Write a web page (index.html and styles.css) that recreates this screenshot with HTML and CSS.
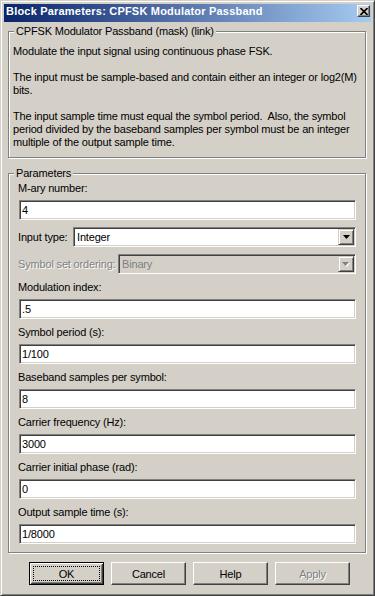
FILE: index.html
```html
<!DOCTYPE html>
<html lang="en">
<head>
	<meta charset="UTF-8"/>
	<meta name="viewport" content="width=device-width, initial-scale=1"/>
	<title>Block Parameters: CPFSK Modulator Passband</title>
	<link rel="stylesheet" href="styles.css">
</head>
<body>

<div class="window">
	<div class="titlebar">
		<span class="title">Block Parameters: CPFSK Modulator Passband</span>
		<span class="close-btn" aria-label="Close">
			<svg width="8" height="7" viewBox="0 0 8 7">
				<path d="M0.5 0 L7.5 7 M7.5 0 L0.5 7" stroke="#000" stroke-width="1.6" fill="none"/>
			</svg>
		</span>
	</div>

	<div class="client">
		<div class="group desc">
			<div class="group-title">CPFSK Modulator Passband (mask) (link)</div>
			<p>Modulate the input signal using continuous phase FSK.</p>
			<p>The input must be sample-based and contain either an integer or log2(M)<br>bits.</p>
			<p>The input sample time must equal the symbol period.&nbsp; Also, the symbol<br>period divided by the baseband samples per symbol must be an integer<br>multiple of the output sample time.</p>
		</div>

		<div class="group params">
			<div class="group-title">Parameters</div>

			<div class="field first">
				<label for="mary">M-ary number:</label>
				<input type="text" id="mary" value="4"/>
			</div>

			<div class="combo-row">
				<label class="combo-label" style="width: 55px;">Input type:</label>
				<div class="combo">
					<span class="combo-value">Integer</span>
					<span class="combo-btn">
						<svg width="7" height="4" viewBox="0 0 7 4"><path d="M0 0 H7 L3.5 4 Z" fill="#000"/></svg>
					</span>
				</div>
			</div>

			<div class="combo-row">
				<label class="combo-label disabled" style="width: 100px;">Symbol set ordering:</label>
				<div class="combo disabled">
					<span class="combo-value">Binary</span>
					<span class="combo-btn">
						<svg width="8" height="5" viewBox="0 0 8 5">
							<path d="M1 1 H8 L4.5 5 Z" fill="#fff"/>
							<path d="M0 0 H7 L3.5 4 Z" fill="#808080"/>
						</svg>
					</span>
				</div>
			</div>

			<div class="field">
				<label for="modidx">Modulation index:</label>
				<input type="text" id="modidx" value=".5"/>
			</div>
			<div class="field">
				<label for="symper">Symbol period (s):</label>
				<input type="text" id="symper" value="1/100"/>
			</div>
			<div class="field">
				<label for="bbsps">Baseband samples per symbol:</label>
				<input type="text" id="bbsps" value="8"/>
			</div>
			<div class="field">
				<label for="fc">Carrier frequency (Hz):</label>
				<input type="text" id="fc" value="3000"/>
			</div>
			<div class="field">
				<label for="phase">Carrier initial phase (rad):</label>
				<input type="text" id="phase" value="0"/>
			</div>
			<div class="field">
				<label for="ts">Output sample time (s):</label>
				<input type="text" id="ts" value="1/8000"/>
			</div>
		</div>

		<div class="buttons">
			<button class="default"><span class="focus">OK</span></button>
			<button>Cancel</button>
			<button>Help</button>
			<button class="disabled">Apply</button>
		</div>
	</div>
</div>

</body>
</html>
```

FILE: styles.css
```css
html, body {
    margin: 0;
    padding: 0;
    overflow: hidden;
}

body {
    font-family: "Liberation Sans", Arial, sans-serif;
    font-size: 11px;
    line-height: 13px;
    letter-spacing: -0.17px;
    color: #000;
    background-color: #d4d0c8;
}

.window {
    box-sizing: border-box;
    width: 375px;
    height: 596px;
    padding: 3px;
    background-color: #d4d0c8;
    border: 1px solid;
    border-color: #d4d0c8 #404040 #404040 #d4d0c8;
    box-shadow: inset 1px 1px 0 #fff, inset -1px -1px 0 #808080;
}

/* Title bar */
.titlebar {
    display: flex;
    align-items: flex-start;
    height: 18px;
    padding-left: 2px;
    background: linear-gradient(to right, #0a246a, #a6caf0);
}

.title {
    flex: 1;
    color: #fff;
    font-weight: bold;
    letter-spacing: 0.2px;
    line-height: 15px;
    white-space: nowrap;
}

.close-btn {
    box-sizing: border-box;
    display: flex;
    align-items: center;
    justify-content: center;
    width: 13px;
    height: 12px;
    margin: 1px 1px 0 0;
    background-color: #d4d0c8;
    border: 1px solid;
    border-color: #fff #404040 #404040 #fff;
    box-shadow: inset -1px -1px 0 #808080;
}

.close-btn svg {
    display: block;
}

/* Group boxes */
.group {
    width: 358px;
    box-sizing: border-box;
    margin-left: 4px;
    border: 1px solid #808080;
    box-shadow: inset 1px 1px 0 #fff, 1px 1px 0 #fff;
}

.group-title {
    width: fit-content;
    margin: -7px 0 0 1px;
    padding: 0 2px;
    background-color: #d4d0c8;
    white-space: nowrap;
}

.desc {
    margin-top: 9px;
    padding: 0 4px 8px 4px;
}

.desc p {
    margin: 7px 0 0 0;
    white-space: nowrap;
}

.desc p + p {
    margin-top: 13px;
}

.params {
    margin-top: 15px;
    padding: 0 9px 8px 9px;
}

.params .group-title {
    margin-left: -4px;
}

/* Edit fields */
.field label {
    display: block;
    margin: 7px 0 5px 0;
    white-space: nowrap;
}

.field.first label {
    margin-top: 2px;
}

input[type="text"] {
    display: block;
    box-sizing: border-box;
    width: 337px;
    height: 20px;
    margin: 0 0 0 1px;
    padding: 0 2px;
    font-family: inherit;
    font-size: 11px;
    letter-spacing: inherit;
    color: #000;
    background-color: #fff;
    border: 1px solid;
    border-color: #808080 #fff #fff #808080;
    box-shadow: inset 1px 1px 0 #404040, inset -1px -1px 0 #d4d0c8;
    outline: none;
}

/* Combo boxes */
.combo-row {
    display: flex;
    align-items: center;
    margin-top: 7px;
}

.combo-label {
    flex: none;
    white-space: nowrap;
}

.combo-label.disabled {
    color: #808080;
    text-shadow: 1px 1px 0 #fff;
}

.combo {
    flex: 1;
    display: flex;
    align-items: center;
    box-sizing: border-box;
    height: 20px;
    padding: 1px;
    background-color: #fff;
    border: 1px solid;
    border-color: #808080 #fff #fff #808080;
    box-shadow: inset 1px 1px 0 #404040, inset -1px -1px 0 #d4d0c8;
}

.combo.disabled {
    background-color: #d4d0c8;
    color: #808080;
}

.combo-value {
    flex: 1;
    padding-left: 2px;
}

.combo-btn {
    box-sizing: border-box;
    display: flex;
    align-items: center;
    justify-content: center;
    width: 16px;
    height: 16px;
    background-color: #d4d0c8;
    border: 1px solid;
    border-color: #d4d0c8 #404040 #404040 #d4d0c8;
    box-shadow: inset 1px 1px 0 #fff, inset -1px -1px 0 #808080;
}

.combo-btn svg {
    display: block;
}

/* Dialog buttons */
.buttons {
    display: flex;
    gap: 7px;
    margin-top: 9px;
    padding-left: 25px;
}

button {
    box-sizing: border-box;
    width: 75px;
    height: 23px;
    padding: 0;
    font-family: inherit;
    font-size: 11px;
    letter-spacing: inherit;
    color: #000;
    background-color: #d4d0c8;
    border: 1px solid;
    border-color: #fff #404040 #404040 #fff;
    box-shadow: inset -1px -1px 0 #808080, inset 1px 1px 0 #d4d0c8;
}

button.default {
    padding: 3px;
    border-color: #000;
    box-shadow: inset 1px 1px 0 #fff, inset -1px -1px 0 #404040,
                inset 2px 2px 0 #d4d0c8, inset -2px -2px 0 #808080;
}

button .focus {
    display: flex;
    align-items: center;
    justify-content: center;
    box-sizing: border-box;
    height: 100%;
    border: 1px dotted #000;
}

button.disabled {
    color: #808080;
    text-shadow: 1px 1px 0 #fff;
}
```
